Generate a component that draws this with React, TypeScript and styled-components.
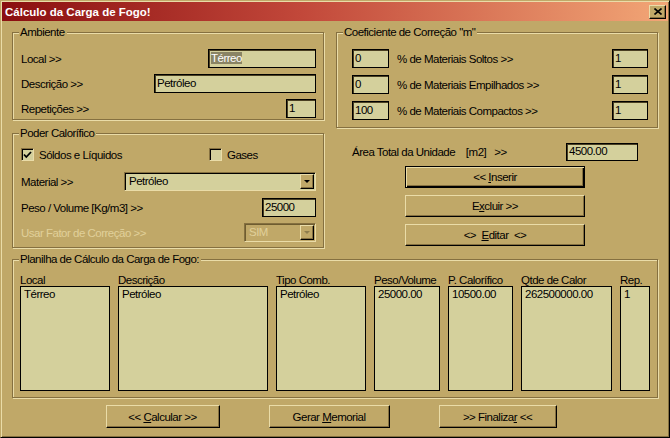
import React from "react";
import styled, { createGlobalStyle } from "styled-components";

const face = "#c0a868";
const field = "#d4d09c";
const light = "#eadca8";
const shadow = "#857040";

const GlobalStyle = createGlobalStyle`
  html, body {
    margin: 0;
    padding: 0;
    background: ${face};
  }
  body {
    font-family: "Liberation Sans", Arial, sans-serif;
    font-size: 11.5px;
    letter-spacing: -0.5px;
    color: #000;
  }
  * { box-sizing: border-box; }
`;

const Window = styled.div`
  width: 670px;
  height: 438px;
  padding: 1px;
  display: flex;
  flex-direction: column;
  background: ${face};
  border: 1px solid;
  border-color: ${face} #000 #000 ${face};
  box-shadow: inset 1px 1px 0 ${light}, inset -1px -1px 0 ${shadow};
`;

const TitleBar = styled.div`
  height: 19px;
  display: flex;
  align-items: center;
  padding: 0 2px 0 3px;
  background: linear-gradient(to right, #8a0e10 0%, #c2483a 45%, #f2a676 100%);
`;

const Title = styled.div`
  flex: 1;
  color: #fff;
  font-weight: bold;
  font-size: 11.5px;
  letter-spacing: 0;
`;

const CloseButton = styled.div`
  width: 17px;
  height: 14px;
  display: flex;
  align-items: center;
  justify-content: center;
  background: ${face};
  border: 1px solid;
  border-color: ${light} #000 #000 ${light};
  box-shadow: inset -1px -1px 0 ${shadow};
`;

const Body = styled.div`
  flex: 1;
  display: flex;
  flex-direction: column;
  padding: 11px 10px 0 10px;
`;

const TopRow = styled.div`
  display: flex;
  gap: 12px;
  align-items: flex-start;
`;

const Column = styled.div<{ $w?: number }>`
  display: flex;
  flex-direction: column;
  width: ${(p) => (p.$w ? `${p.$w}px` : "auto")};
  flex: ${(p) => (p.$w ? "none" : 1)};
`;

const Group = styled.div<{ $h: number; $mt?: number }>`
  position: relative;
  height: ${(p) => p.$h}px;
  margin-top: ${(p) => p.$mt ?? 0}px;
  border: 1px solid ${shadow};
  box-shadow: inset 1px 1px 0 ${light}, 1px 1px 0 ${light};
`;

const Legend = styled.div`
  position: absolute;
  top: -7px;
  left: 6px;
  padding: 0 2px 0 1px;
  line-height: 13px;
  background: ${face};
`;

const Stack = styled.div<{ $pad: string; $gap: number }>`
  display: flex;
  flex-direction: column;
  gap: ${(p) => p.$gap}px;
  padding: ${(p) => p.$pad};
`;

const Row = styled.div<{ $mt?: number }>`
  display: flex;
  align-items: center;
  justify-content: space-between;
  margin-top: ${(p) => p.$mt ?? 0}px;
`;

const Label = styled.span<{ $disabled?: boolean; $ml?: number }>`
  white-space: nowrap;
  margin-left: ${(p) => p.$ml ?? 0}px;
  color: ${(p) => (p.$disabled ? "#e0d09a" : "#000")};
`;

const Field = styled.div<{ $w: number; $h?: number; $ml?: string }>`
  width: ${(p) => p.$w}px;
  height: ${(p) => p.$h ?? 19}px;
  margin-left: ${(p) => p.$ml ?? "0"};
  flex: none;
  padding: 0 2px;
  line-height: ${(p) => (p.$h ?? 19) - 3}px;
  white-space: nowrap;
  overflow: hidden;
  background: ${field};
  border: 1px solid #000;
  box-shadow: inset 1px 1px 0 #4a3f22;
`;

const Selected = styled.span`
  background: #8a8464;
  color: #fff;
`;

const Select = styled.div<{ $w: number; $disabled?: boolean }>`
  width: ${(p) => p.$w}px;
  height: 19px;
  flex: none;
  display: flex;
  background: ${(p) => (p.$disabled ? face : field)};
  border: 1px solid;
  border-color: ${shadow} ${light} ${light} ${shadow};
  box-shadow: inset 1px 1px 0 ${(p) => (p.$disabled ? "#6e5c30" : "#000")};
`;

const SelectText = styled.div<{ $disabled?: boolean }>`
  flex: 1;
  padding: 1px 0 0 4px;
  line-height: 15px;
  color: ${(p) => (p.$disabled ? "#e0d09a" : "#000")};
`;

const SelectArrow = styled.div<{ $disabled?: boolean }>`
  width: 14px;
  margin: 1px 1px 1px 0;
  display: flex;
  align-items: center;
  justify-content: center;
  background: ${face};
  border: 1px solid;
  border-color: ${light} #000 #000 ${light};
  box-shadow: inset -1px -1px 0 ${shadow};

  &::after {
    content: "";
    border-left: 3px solid transparent;
    border-right: 3px solid transparent;
    border-top: 3px solid ${(p) => (p.$disabled ? "#8d7c4c" : "#000")};
  }
`;

const CheckRow = styled.div`
  display: flex;
  align-items: center;
`;

const CheckItem = styled.div<{ $w?: number }>`
  display: flex;
  align-items: center;
  gap: 5px;
  width: ${(p) => (p.$w ? `${p.$w}px` : "auto")};
`;

const Box = styled.div`
  width: 13px;
  height: 13px;
  display: flex;
  align-items: center;
  justify-content: center;
  background: ${field};
  border: 1px solid;
  border-color: ${shadow} ${light} ${light} ${shadow};
  box-shadow: inset 1px 1px 0 #000;
`;

const AreaRow = styled(Row)`
  margin-top: 15px;
  padding: 0 20px 0 16px;
`;

const ButtonStack = styled.div`
  display: flex;
  flex-direction: column;
  gap: 7px;
  margin: 5px 0 0 69px;
`;

const Button = styled.div<{ $w: number; $h?: number; $default?: boolean }>`
  width: ${(p) => p.$w}px;
  height: ${(p) => p.$h ?? 22}px;
  display: flex;
  align-items: center;
  justify-content: center;
  white-space: pre;
  background: ${face};
  border: 1px solid;
  border-color: ${(p) => (p.$default ? "#000" : `${light} #000 #000 ${light}`)};
  box-shadow: ${(p) =>
    p.$default
      ? `inset 1px 1px 0 ${light}, inset -1px -1px 0 #000, inset -2px -2px 0 ${shadow}`
      : `inset -1px -1px 0 ${shadow}`};
`;

const Columns = styled.div`
  display: flex;
  gap: 8px;
  padding: 14px 0 0 7px;
`;

const ListColumn = styled.div<{ $w: number }>`
  width: ${(p) => p.$w}px;
  display: flex;
  flex-direction: column;
`;

const ColumnTitle = styled.div`
  line-height: 12px;
  white-space: nowrap;
`;

const ListBox = styled.div`
  height: 105px;
  padding: 1px 3px;
  line-height: 13px;
  white-space: nowrap;
  overflow: hidden;
  background: ${field};
  border: 1px solid #000;
`;

const Footer = styled.div`
  display: flex;
  justify-content: center;
  gap: 49px;
  margin-top: 7px;
  padding-right: 8px;
`;

const columns = [
  { title: "Local", w: 90, value: "Térreo" },
  { title: "Descrição", w: 150, value: "Petróleo" },
  { title: "Tipo Comb.", w: 90, value: "Petróleo" },
  { title: "Peso/Volume", w: 66, value: "25000.00" },
  { title: "P. Calorífico", w: 65, value: "10500.00" },
  { title: "Qtde de Calor", w: 91, value: "262500000.00" },
  { title: "Rep.", w: 30, value: "1" },
];

const coef = [
  { pct: "0", label: "% de Materiais Soltos >>" },
  { pct: "0", label: "% de Materiais Empilhados >>" },
  { pct: "100", label: "% de Materiais Compactos >>" },
];

export default function App() {
  return (
    <>
      <GlobalStyle />
      <Window>
        <TitleBar>
          <Title>Cálculo da Carga de Fogo!</Title>
          <CloseButton>
            <svg width="8" height="7" viewBox="0 0 8 7">
              <path d="M0.5 0.5 L7.5 6.5 M7.5 0.5 L0.5 6.5" stroke="#000" strokeWidth="1.6" />
            </svg>
          </CloseButton>
        </TitleBar>
        <Body>
          <TopRow>
            <Column $w={312}>
              <Group $h={88}>
                <Legend>Ambiente</Legend>
                <Stack $pad="16px 7px 0 8px" $gap={6}>
                  <Row>
                    <Label>Local &gt;&gt;</Label>
                    <Field $w={108}>
                      <Selected>Térreo</Selected>
                    </Field>
                  </Row>
                  <Row>
                    <Label>Descrição &gt;&gt;</Label>
                    <Field $w={162}>Petróleo</Field>
                  </Row>
                  <Row>
                    <Label>Repetições &gt;&gt;</Label>
                    <Field $w={30}>1</Field>
                  </Row>
                </Stack>
              </Group>
              <Group $h={115} $mt={13}>
                <Legend>Poder Calorífico</Legend>
                <Stack $pad="14px 7px 0 8px" $gap={0}>
                  <CheckRow>
                    <CheckItem $w={188}>
                      <Box>
                        <svg width="9" height="8" viewBox="0 0 9 8">
                          <path d="M1 3.5 L3.3 6 L8 1" stroke="#000" strokeWidth="1.8" fill="none" />
                        </svg>
                      </Box>
                      <Label>Sóldos e Líquidos</Label>
                    </CheckItem>
                    <CheckItem>
                      <Box />
                      <Label>Gases</Label>
                    </CheckItem>
                  </CheckRow>
                  <Row $mt={11}>
                    <Label>Material &gt;&gt;</Label>
                    <Select $w={192}>
                      <SelectText>Petróleo</SelectText>
                      <SelectArrow />
                    </Select>
                  </Row>
                  <Row $mt={7}>
                    <Label>Peso / Volume [Kg/m3] &gt;&gt;</Label>
                    <Field $w={54}>25000</Field>
                  </Row>
                  <Row $mt={6}>
                    <Label $disabled>Usar Fator de Correção &gt;&gt;</Label>
                    <Select $w={72} $disabled>
                      <SelectText $disabled>SIM</SelectText>
                      <SelectArrow $disabled />
                    </Select>
                  </Row>
                </Stack>
              </Group>
            </Column>
            <Column>
              <Group $h={96}>
                <Legend>Coeficiente de Correção "m"</Legend>
                <Stack $pad="16px 9px 0 15px" $gap={7}>
                  {coef.map((c) => (
                    <Row key={c.label}>
                      <Field $w={37}>{c.pct}</Field>
                      <Label $ml={8}>{c.label}</Label>
                      <Field $w={36} $ml="auto">
                        1
                      </Field>
                    </Row>
                  ))}
                </Stack>
              </Group>
              <AreaRow>
                <Label>Área Total da Unidade&nbsp;&nbsp;&nbsp; [m2]&nbsp;&nbsp; &gt;&gt;</Label>
                <Field $w={72} $h={18}>
                  4500.00
                </Field>
              </AreaRow>
              <ButtonStack>
                <Button $w={180} $default>
                  <span>
                    {"<< "}
                    <u>I</u>
                    {"nserir"}
                  </span>
                </Button>
                <Button $w={180}>
                  <span>
                    {"E"}
                    <u>x</u>
                    {"cluir >>"}
                  </span>
                </Button>
                <Button $w={180}>
                  <span>
                    {"<>  "}
                    <u>E</u>
                    {"ditar  <>"}
                  </span>
                </Button>
              </ButtonStack>
            </Column>
          </TopRow>
          <Group $h={139} $mt={11}>
            <Legend>Planilha de Cálculo da Carga de Fogo:</Legend>
            <Columns>
              {columns.map((c) => (
                <ListColumn key={c.title} $w={c.w}>
                  <ColumnTitle>{c.title}</ColumnTitle>
                  <ListBox>{c.value}</ListBox>
                </ListColumn>
              ))}
            </Columns>
          </Group>
          <Footer>
            <Button $w={114} $h={23}>
              <span>
                {"<< "}
                <u>C</u>
                {"alcular >>"}
              </span>
            </Button>
            <Button $w={121} $h={23}>
              <span>
                {"Gerar "}
                <u>M</u>
                {"emorial"}
              </span>
            </Button>
            <Button $w={118} $h={23}>
              <span>
                {">> Finaliza"}
                <u>r</u>
                {" <<"}
              </span>
            </Button>
          </Footer>
        </Body>
      </Window>
    </>
  );
}
